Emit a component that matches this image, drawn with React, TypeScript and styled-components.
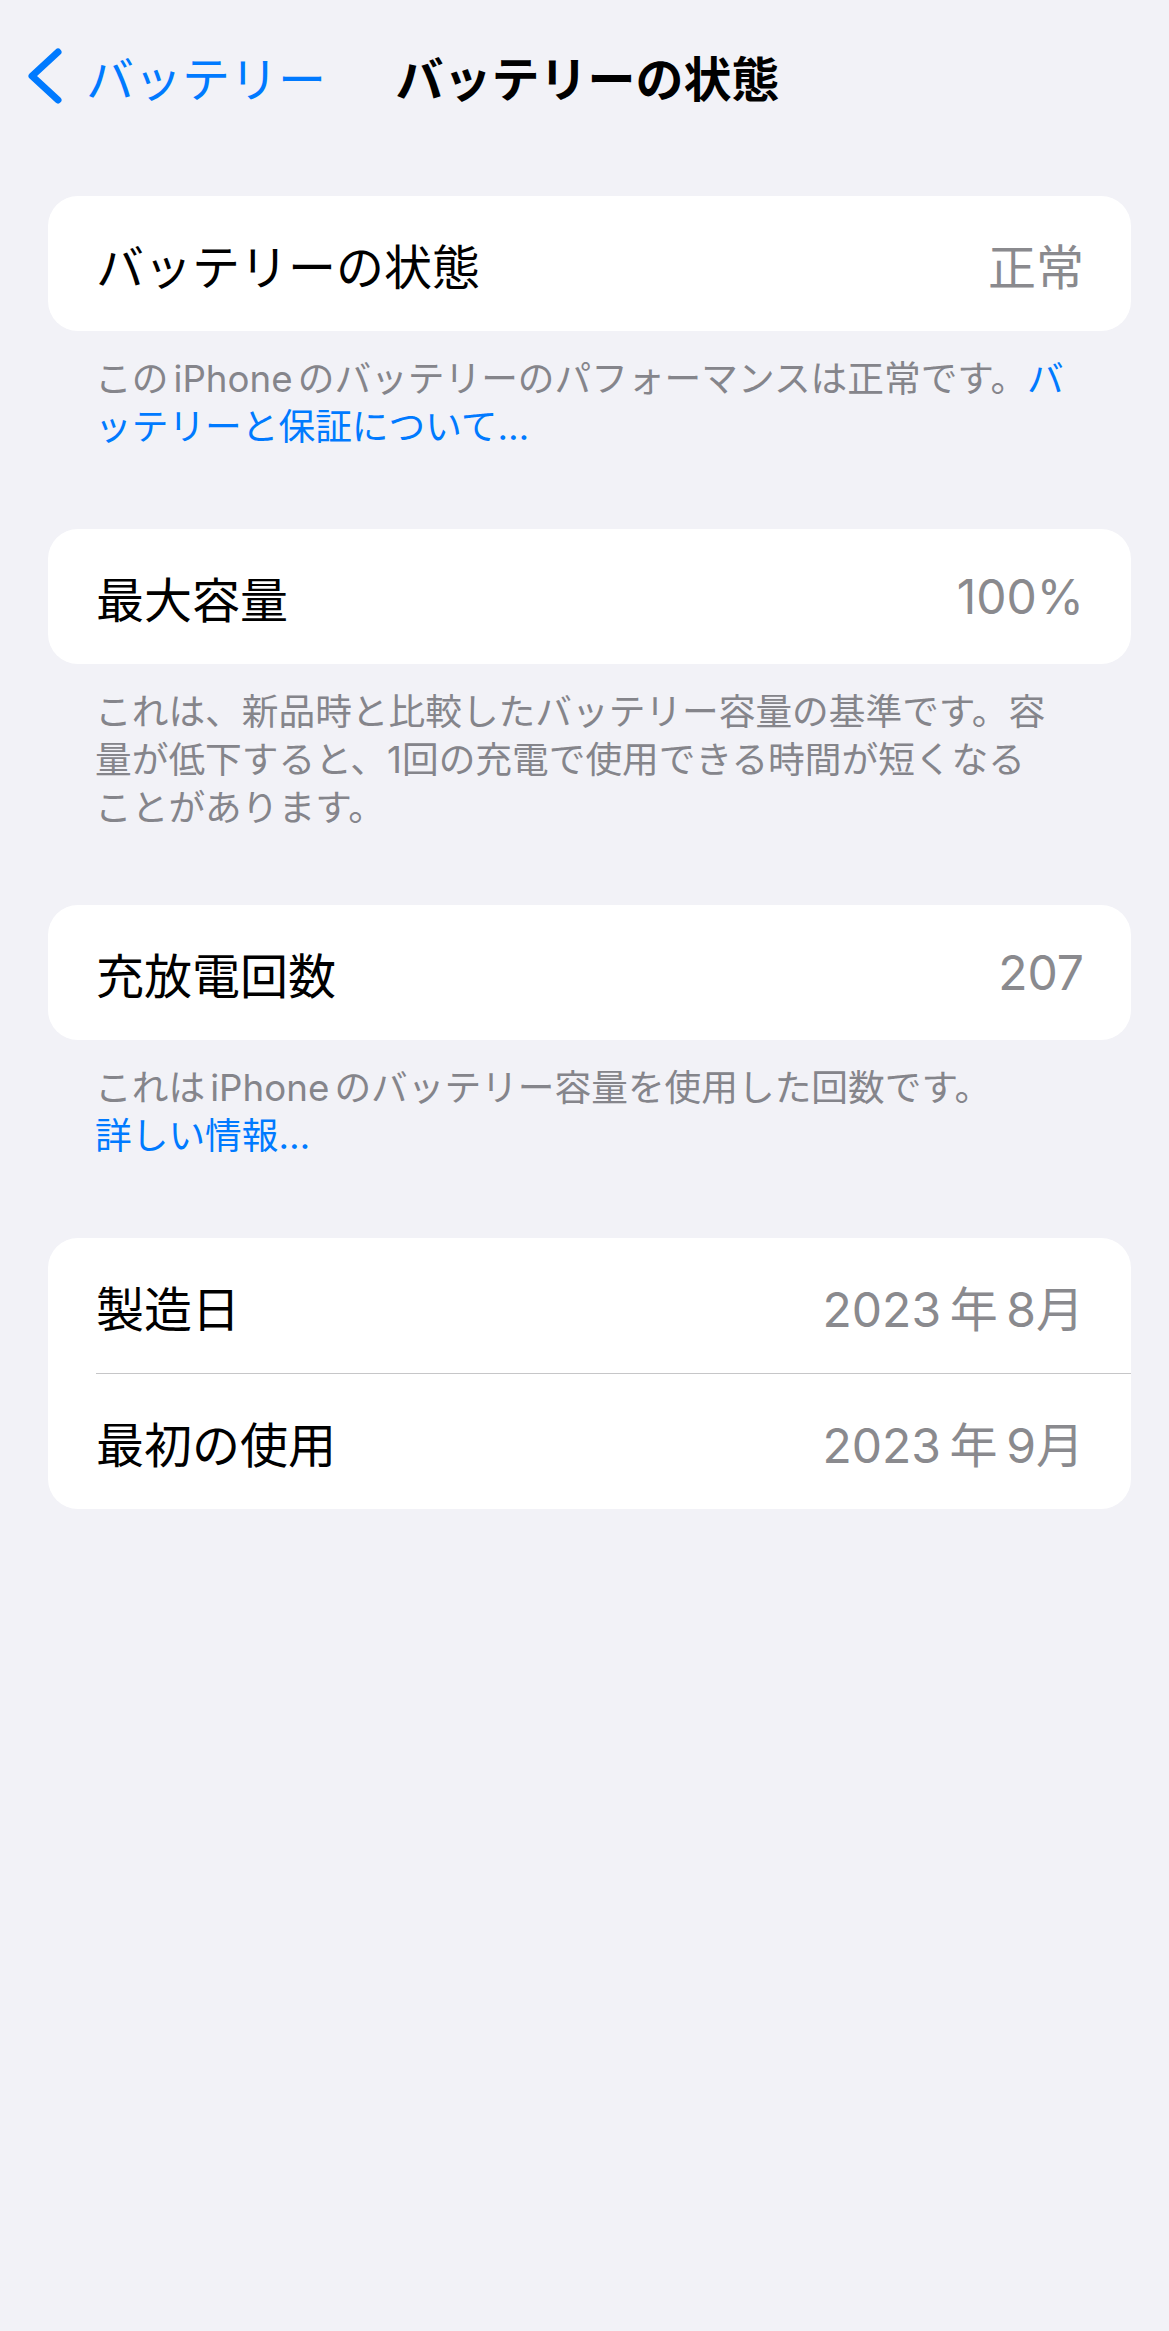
import React from 'react'
import styled, { createGlobalStyle } from 'styled-components'

const GlobalStyle = createGlobalStyle`
  html, body {
    margin: 0;
    padding: 0;
    background: #f2f2f7;
  }
  body {
    font-family: Inter, "Noto Sans CJK JP", sans-serif;
    -webkit-font-smoothing: antialiased;
  }
`

const Page = styled.div`
  min-height: 2331px;
  background: #f2f2f7;
`

const NavBar = styled.header`
  display: grid;
  grid-template-columns: 1fr auto 1fr;
  align-items: center;
  height: 152px;
`

const BackButton = styled.a`
  display: flex;
  align-items: center;
  gap: 22px;
  justify-self: start;
  padding-left: 24px;
  color: #007aff;
  font-size: 48px;
  text-decoration: none;
`

const Title = styled.h1`
  margin: 0 0 0 6px;
  font-size: 48px;
  font-weight: 700;
  color: #000;
`

const List = styled.main`
  display: flex;
  flex-direction: column;
  padding: 44px 38px 0 48px;
`

const Section = styled.section<{ $space?: number }>`
  display: flex;
  flex-direction: column;
  margin-top: ${({ $space }) => $space ?? 0}px;
`

const Card = styled.div`
  background: #fff;
  border-radius: 30px;
  overflow: hidden;
`

const Row = styled.div`
  display: flex;
  align-items: center;
  justify-content: space-between;
  height: 135px;
  padding: 0 47px 0 48px;
  font-size: 48px;
  color: #000;
`

const Value = styled.span`
  color: #8a8a8e;
`

const Divider = styled.div`
  height: 1px;
  margin-left: 48px;
  background: #c6c6c8;
`

const Footer = styled.p`
  margin: 0;
  padding: 24px 50px 0 47px;
  font-size: 36.7px;
  line-height: 48px;
  color: #85858b;
  white-space: nowrap;
`

const Link = styled.a`
  color: #007aff;
  text-decoration: none;
`

const Latin = styled.span<{ $gap?: number }>`
  margin: 0 ${({ $gap }) => $gap ?? 0.14}em;
`

const Chevron = () => (
  <svg width="40" height="64" viewBox="0 0 40 64" fill="none">
    <path
      d="M34 8 L8 32 L34 56"
      stroke="#007aff"
      strokeWidth="7"
      strokeLinecap="round"
      strokeLinejoin="round"
    />
  </svg>
)

const App = () => {
  return (
    <Page>
      <GlobalStyle />
      <NavBar>
        <BackButton>
          <Chevron />
          バッテリー
        </BackButton>
        <Title>バッテリーの状態</Title>
        <div />
      </NavBar>

      <List>
        <Section>
          <Card>
            <Row>
              バッテリーの状態
              <Value>正常</Value>
            </Row>
          </Card>
          <Footer>
            この<Latin>iPhone</Latin>のバッテリーのパフォーマンスは正常です。
            <Link>
              バ
              <br />
              ッテリーと保証について…
            </Link>
          </Footer>
        </Section>

        <Section $space={78}>
          <Card>
            <Row>
              最大容量
              <Value>100%</Value>
            </Row>
          </Card>
          <Footer>
            これは、新品時と比較したバッテリー容量の基準です。容
            <br />
            量が低下すると、1回の充電で使用できる時間が短くなる
            <br />
            ことがあります。
          </Footer>
        </Section>

        <Section $space={73}>
          <Card>
            <Row>
              充放電回数
              <Value>207</Value>
            </Row>
          </Card>
          <Footer>
            これは<Latin>iPhone</Latin>のバッテリー容量を使用した回数です。
            <br />
            <Link>詳しい情報…</Link>
          </Footer>
        </Section>

        <Section $space={78}>
          <Card>
            <Row>
              製造日
              <Value>
                2023<Latin $gap={0.18}>年</Latin>8月
              </Value>
            </Row>
            <Divider />
            <Row>
              最初の使用
              <Value>
                2023<Latin $gap={0.18}>年</Latin>9月
              </Value>
            </Row>
          </Card>
        </Section>
      </List>
    </Page>
  )
}

export default App
